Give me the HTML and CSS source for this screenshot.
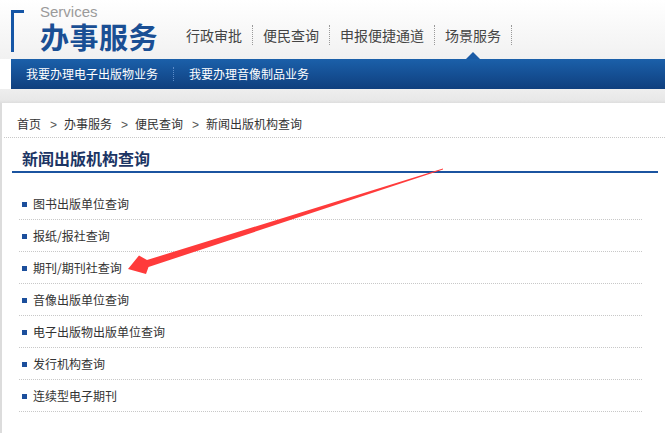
FILE: index.html
```html
<!DOCTYPE html>
<html lang="zh-CN">
<head>
<meta charset="utf-8">
<title>办事服务</title>
<link rel="stylesheet" href="styles.css">
</head>
<body>
<div class="page">
  <header class="header">
    <div class="logo">
      <span class="bracket"></span>
      <div class="logo-text">
        <span class="logo-en">Services</span>
        <span class="logo-cn">办事服务</span>
      </div>
    </div>
    <nav class="mainnav">
      <a class="nav-item">行政审批</a>
      <a class="nav-item">便民查询</a>
      <a class="nav-item">申报便捷通道</a>
      <a class="nav-item active">场景服务</a>
    </nav>
  </header>
  <div class="subbar">
    <a class="sub-item">我要办理电子出版物业务</a>
    <a class="sub-item">我要办理音像制品业务</a>
  </div>
  <div class="band"></div>
  <main class="content">
    <div class="crumbs">
      <span>首页</span><span class="gt">&gt;</span><span>办事服务</span><span class="gt">&gt;</span><span>便民查询</span><span class="gt">&gt;</span><span>新闻出版机构查询</span>
    </div>
    <h1 class="title">新闻出版机构查询</h1>
    <ul class="list">
      <li>图书出版单位查询</li>
      <li>报纸/报社查询</li>
      <li>期刊/期刊社查询</li>
      <li>音像出版单位查询</li>
      <li>电子出版物出版单位查询</li>
      <li>发行机构查询</li>
      <li>连续型电子期刊</li>
    </ul>
  </main>
  <svg class="arrow" width="665" height="433" viewBox="0 0 665 433">
    <polygon points="443,168.6 147,260 139,255.5 128,269 146,274 148.5,267 443,169.6" fill="#ff3b3b"/>
  </svg>
</div>
</body>
</html>
```

FILE: styles.css
```css
* { box-sizing: border-box; margin: 0; padding: 0; }
html, body { width: 665px; height: 433px; overflow: hidden; background: #fff; }
body { font-family: "Noto Sans CJK SC", "Liberation Sans", sans-serif; color: #333; }
a { text-decoration: none; color: inherit; }
.page { position: relative; width: 665px; height: 433px; }

.header {
  height: 59px;
  display: flex;
  align-items: flex-start;
  background: linear-gradient(#ffffff, #f1f1f1);
}
.logo { display: flex; padding: 10px 0 0 11px; }
.bracket {
  width: 13px; height: 42px;
  border-left: 3px solid #1556a6;
  border-top: 3px solid #1556a6;
  background: transparent;
}
.logo-text { display: flex; flex-direction: column; margin: -5px 0 0 16px; }
.logo-en {
  font-family: "Liberation Sans", Arial, sans-serif;
  font-size: 15px; line-height: 14px; color: #9a9a9a;
}
.logo-cn {
  margin-top: 2px;
  font-size: 29px; line-height: 31px; font-weight: 700; color: #1a4f94;
  letter-spacing: 0.5px;
}
.mainnav { display: flex; margin: 25px 0 0 18px; }
.nav-item {
  position: relative;
  font-size: 14px; line-height: 20px; color: #444;
  padding: 0 10px;
  border-right: 1px dotted #999;
}
.nav-item.active::after {
  content: "";
  position: absolute;
  left: 50%; top: 27px;
  margin-left: -7px;
  border-left: 7px solid transparent;
  border-right: 7px solid transparent;
  border-bottom: 7px solid #1a5ba6;
}

.subbar {
  height: 30px;
  margin-left: 11px;
  display: flex;
  align-items: center;
  background: linear-gradient(#1b60aa, #0f3f7e);
}
.sub-item {
  font-size: 12px; line-height: 14px; color: #fff;
  padding: 0 15px;
  border-right: 1px dotted #5b8cc9;
}
.sub-item:last-child { border-right: 0; }

.band {
  height: 14px;
  background: linear-gradient(#eeeeee, #e8e8e8 80%, #dedede);
}

.content {
  height: 330px;
  border-left: 2px solid #dcdcdc;
}
.crumbs {
  margin-left: 2px;
  padding: 11px 0 2px 13px;
  font-size: 12px; line-height: 20px; color: #333;
  border-bottom: 1px dotted #c8c8c8;
}
.gt { font-family: "Liberation Sans", sans-serif; color: #555; margin: 0 7px 0 9px; }
.title {
  margin: 0 7px 0 10px;
  padding: 8px 0 1px 10px;
  font-size: 16px; line-height: 24px; font-weight: 700; color: #1c3564;
  border-bottom: 2px solid #1b54a0;
}
.list { list-style: none; margin: 15px 0 0 17px; width: 623px; }
.list li {
  position: relative;
  height: 32px;
  padding-left: 14px;
  font-size: 12px; line-height: 32px; color: #333;
  border-bottom: 1px dotted #c8c8c8;
}
.list li::before {
  content: "";
  position: absolute;
  left: 3px; top: 14px;
  width: 5px; height: 5px;
  background: #1c4f9c;
}

.arrow { position: absolute; left: 0; top: 0; pointer-events: none; }
```
